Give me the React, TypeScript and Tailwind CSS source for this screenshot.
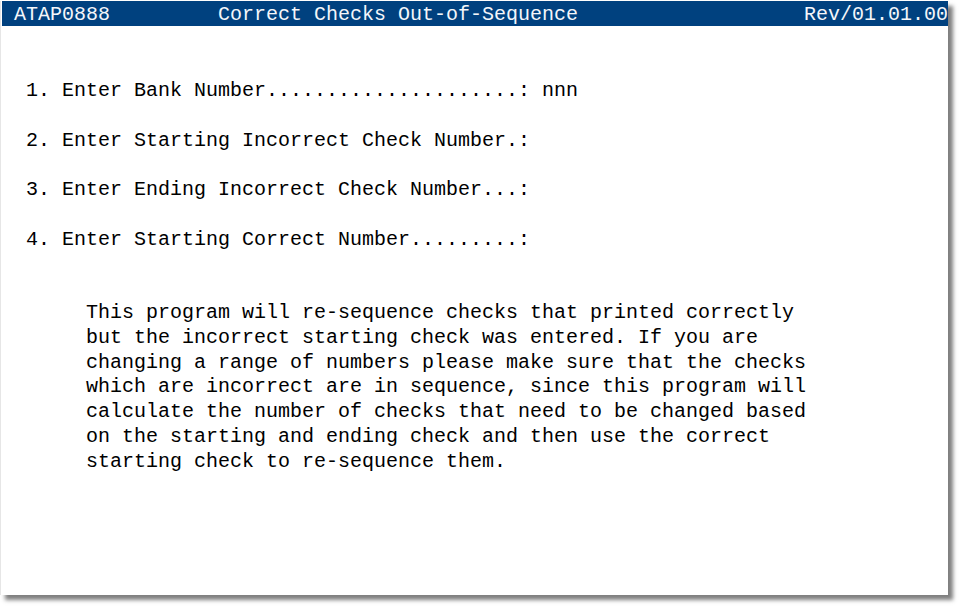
import React from "react";

const fields = [
  "1. Enter Bank Number.....................: nnn",
  "2. Enter Starting Incorrect Check Number.:",
  "3. Enter Ending Incorrect Check Number...:",
  "4. Enter Starting Correct Number.........:",
];

const helpText = [
  "This program will re-sequence checks that printed correctly",
  "but the incorrect starting check was entered. If you are",
  "changing a range of numbers please make sure that the checks",
  "which are incorrect are in sequence, since this program will",
  "calculate the number of checks that need to be changed based",
  "on the starting and ending check and then use the correct",
  "starting check to re-sequence them.",
];

export default function App() {
  return (
    <div className="w-[972px] h-[606px] bg-white overflow-hidden">
      <div
        className="w-[948px] h-[594px] bg-white border-l border-[#e6e6e6] shadow-[5px_5px_4px_rgba(0,0,0,0.5)] text-[20px] leading-[24.8px] text-black"
        style={{ fontFamily: '"Liberation Mono", "DejaVu Sans Mono", monospace' }}
      >
        {/* title bar */}
        <div className="mt-[1px] ml-[1px] h-[25px] bg-[#00417f] text-[#f4f6fa] flex items-center pt-[3px] pl-[12px] whitespace-pre">
          <span className="w-[204px]">ATAP0888</span>
          <span>Correct Checks Out-of-Sequence</span>
          <span className="flex-1" />
          <span>Rev/01.01.00</span>
        </div>

        <div className="pl-[25px] pt-[53px] flex flex-col gap-[24.8px]">
          {fields.map((f) => (
            <div key={f} className="whitespace-pre">
              {f}
            </div>
          ))}
        </div>

        <div className="pl-[85px] mt-[48.4px]">
          {helpText.map((line) => (
            <div key={line} className="whitespace-pre">
              {line}
            </div>
          ))}
        </div>
      </div>
    </div>
  );
}
